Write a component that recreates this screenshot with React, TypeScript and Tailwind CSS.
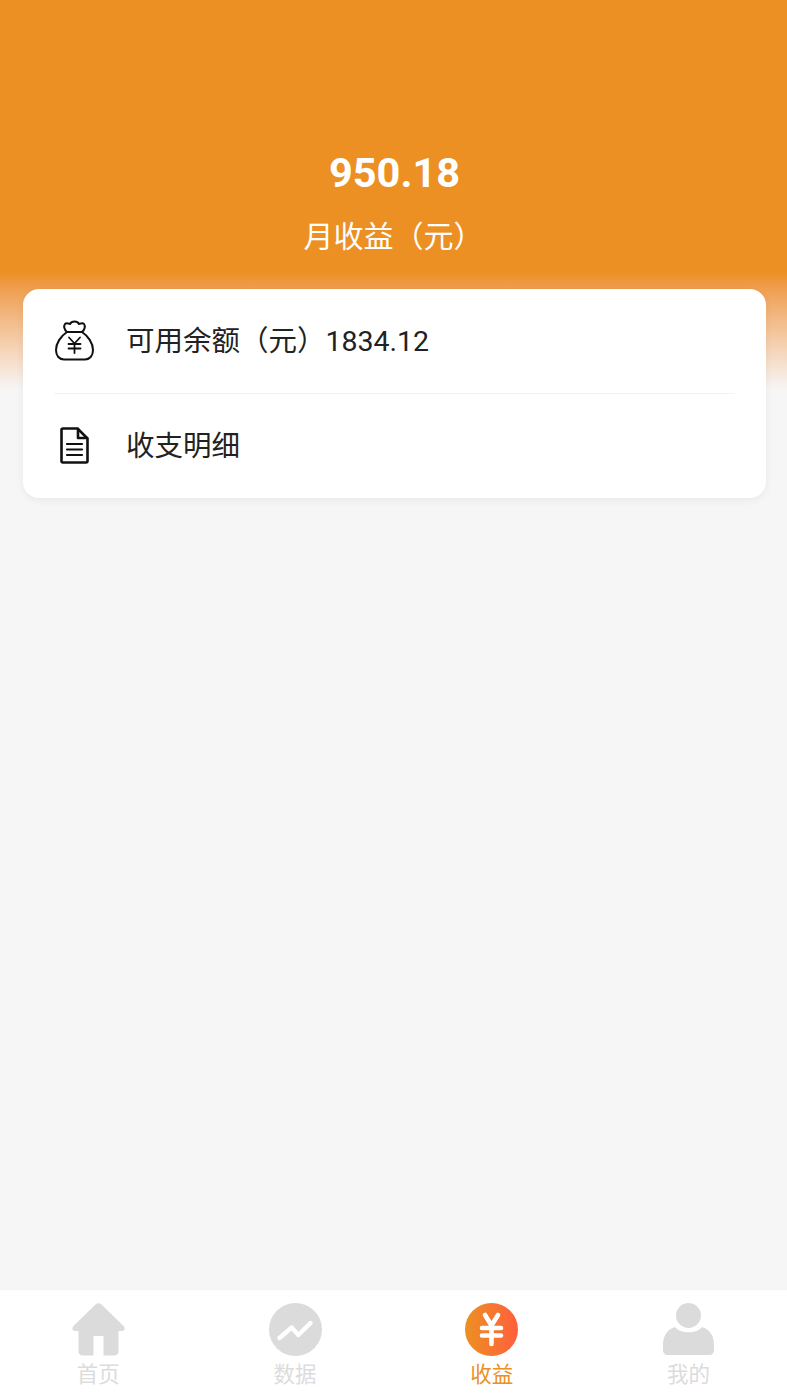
import type { ReactNode } from "react"

function MoneyBagIcon() {
  return (
    <svg width="40" height="41" viewBox="0 0 40 41" fill="none" stroke="#111" strokeWidth="2" strokeLinecap="round" strokeLinejoin="round">
      <path d="M12 12 C9 9.5 8.5 6 10 4 C11.5 2.5 13.5 3.5 15 4 C16.5 0.5 22.5 0.5 24 4 C25.5 3.5 27.5 2.5 29 4 C30.5 6 30 9.5 27 12 Z" />
      <path d="M12 12 C6 16 1 23 1 30 C1 36 4.5 39.5 9 39.5 L30 39.5 C34.5 39.5 38 36 38 30 C38 23 33 16 27 12" />
      <path d="M14 17.5 L19.5 23.5 L25 17.5 M13.5 24 L25.5 24 M13.5 28.5 L25.5 28.5 M19.5 23.5 L19.5 33" strokeWidth="1.8" />
    </svg>
  )
}

function DocIcon() {
  return (
    <svg width="29" height="37" viewBox="0 0 29 37" fill="none" stroke="#111" strokeWidth="2.6" strokeLinejoin="round" strokeLinecap="round">
      <path d="M3 1.5 L17.5 1.5 L27.5 11.5 L27.5 34 C27.5 35 27 35.5 26 35.5 L3 35.5 C2 35.5 1.5 35 1.5 34 L1.5 3 C1.5 2 2 1.5 3 1.5 Z" />
      <path d="M18 2 L18 11 L27 11" />
      <path d="M7 17 L22 17 M7 22.5 L22 22.5 M7 28 L22 28" strokeWidth="2.2" />
    </svg>
  )
}

function HomeIcon() {
  return (
    <svg width="53" height="53" viewBox="0 0 53 53" fill="#dbdbdb">
      <path d="M23.5 1.4 C25.2 -0.3 27.8 -0.3 29.5 1.4 L51.5 23 C53.5 25 52.8 28 50 28 L46.5 28 L46.5 48 C46.5 50.8 45 52.5 42 52.5 L31.5 52.5 L31.5 33 L21.5 33 L21.5 52.5 L11 52.5 C8 52.5 6.5 50.8 6.5 48 L6.5 28 L3 28 C0.2 28 -0.5 25 1.5 23 Z" />
    </svg>
  )
}

function ChartIcon() {
  return (
    <svg width="53" height="53" viewBox="0 0 53 53">
      <circle cx="26.5" cy="26.5" r="26.5" fill="#dbdbdb" />
      <path d="M10.5 35 L22.7 24.5 L29.3 32 L41.5 20" fill="none" stroke="#fff" strokeWidth="4.4" strokeLinecap="round" strokeLinejoin="round" />
    </svg>
  )
}

function YuanIcon() {
  return (
    <svg width="53" height="53" viewBox="0 0 53 53">
      <defs>
        <linearGradient id="yuan" x1="0" y1="0" x2="1" y2="0">
          <stop offset="0" stopColor="#ec9023" />
          <stop offset="1" stopColor="#ff5f3c" />
        </linearGradient>
      </defs>
      <circle cx="26.5" cy="26.5" r="26.5" fill="url(#yuan)" />
      <path d="M20 12 L26.5 22.5 L33 12 M17 25 L36 25 M17 32.5 L36 32.5 M26.5 22.5 L26.5 41" fill="none" stroke="#fff" strokeWidth="4.6" strokeLinecap="round" strokeLinejoin="round" />
    </svg>
  )
}

function UserIcon() {
  return (
    <svg width="51" height="53" viewBox="0 0 51 53" fill="#dbdbdb">
      <circle cx="25.5" cy="12.5" r="12.5" />
      <path d="M12 24 C17 31 34 31 39 24 C46 26 51 32 51 42 L51 47 C51 50 49 52 46 52 L5 52 C2 52 0 50 0 47 L0 42 C0 32 5 26 12 24 Z" />
    </svg>
  )
}

function Row({ icon, label, border }: { icon: ReactNode; label: string; border?: boolean }) {
  return (
    <div className={`mx-[31px] flex h-[104.5px] items-center ${border ? "border-b border-[#f3f3f3]" : ""}`}>
      <div className="flex w-[41px] justify-center">{icon}</div>
      <span className="ml-[31px] pt-[3px] text-[28.5px] leading-none text-[#222]">{label}</span>
    </div>
  )
}

function Tab({ icon, label, active }: { icon: ReactNode; label: string; active?: boolean }) {
  return (
    <div className="flex flex-col items-center pt-[13px]">
      <div className="flex h-[53px] items-center">{icon}</div>
      <span className={`mt-[5px] text-[21.5px] leading-[28px] ${active ? "text-[#ec9023]" : "text-[#dcdcdc]"}`}>{label}</span>
    </div>
  )
}

export default function App() {
  return (
    <div className="flex h-[1400px] flex-col overflow-hidden bg-[#f6f6f7] font-['Roboto','Noto_Sans_CJK_SC',sans-serif]">
      {/* Header */}
      <div className="h-[390px] bg-gradient-to-b from-[#ec9023] from-[70%] to-[#f6f6f7] pt-[148px] text-center text-white">
        <div className="pl-[2px] text-[41.5px] font-bold leading-[50px]">950.18</div>
        <div className="mt-[21px] text-[30px] leading-[36px]">月收益（元）</div>
      </div>

      {/* Card */}
      <div className="relative ml-[23px] mr-[21px] -mt-[101px] rounded-[16px] bg-white shadow-[0_2px_8px_rgba(0,0,0,0.06)]">
        <Row icon={<MoneyBagIcon />} label="可用余额（元）1834.12" border />
        <Row icon={<DocIcon />} label="收支明细" />
      </div>

      {/* Bottom nav */}
      <div className="mt-auto grid h-[111px] grid-cols-4 border-t border-[#f3f3f3] bg-white">
        <Tab icon={<HomeIcon />} label="首页" />
        <Tab icon={<ChartIcon />} label="数据" />
        <Tab icon={<YuanIcon />} label="收益" active />
        <Tab icon={<UserIcon />} label="我的" />
      </div>
    </div>
  )
}
